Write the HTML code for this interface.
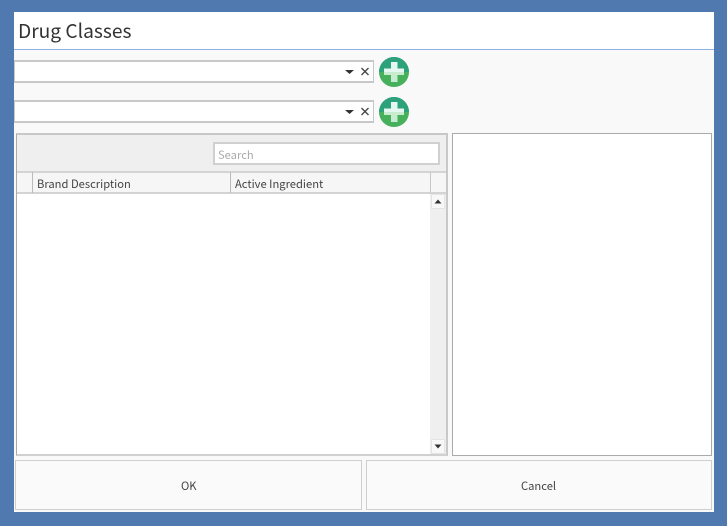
<!DOCTYPE html>
<html><head><meta charset="utf-8">
<style>
html,body{margin:0;padding:0;width:727px;height:526px;overflow:hidden;background:#5079b0;font-family:"Noto Sans CJK SC","Liberation Sans",sans-serif;}
div,svg{position:absolute;box-sizing:border-box;}
.t{white-space:nowrap;color:#444;font-size:11.2px;line-height:14px;}
.combo{left:14px;width:360px;height:23px;background:#fff;border:1px solid #c8c8c8;border-top-width:2px;border-bottom-width:2px;border-left-width:1px;}
</style></head><body>
<div style="left:14px;top:12px;width:700px;height:500px;background:#f9f9f9;"></div>
<div style="left:14px;top:12px;width:700px;height:37px;background:#fff;"></div>
<div style="left:14px;top:49px;width:700px;height:1px;background:#8fb3e0;"></div>
<div style="left:18px;top:17px;font-size:19.2px;line-height:26px;color:#333;white-space:nowrap;">Drug Classes</div>

<div class="combo" style="top:60px;"></div>
<div class="combo" style="top:100px;"></div>
<svg style="left:340px;top:60px" width="34" height="23"><path d="M5 10h9l-4.500 4z" fill="#333"/><path d="M21.500 8l7 7M28.500 8l-7 7" stroke="#444" stroke-width="1.300" fill="none"/></svg>
<svg style="left:340px;top:100px" width="34" height="23"><path d="M5 10h9l-4.500 4z" fill="#333"/><path d="M21.500 8l7 7M28.500 8l-7 7" stroke="#444" stroke-width="1.300" fill="none"/></svg>

<svg style="left:379px;top:57px" width="30" height="30"><circle cx="15" cy="15" r="15" fill="#46b05c"/><path d="M0 15A15 15 0 0 1 30 15z" fill="#2da07c"/><path d="M12 5h6.500v6.500H25v6.500h-6.500V25H12v-7H5v-6.500h7z" fill="#c8ecd0"/><path d="M12 5h6.500v6.500H25V15H5v-3.500h7z" fill="#e6f7f1"/></svg>
<svg style="left:379px;top:97px" width="30" height="30"><circle cx="15" cy="15" r="15" fill="#46b05c"/><path d="M0 15A15 15 0 0 1 30 15z" fill="#2da07c"/><path d="M12 5h6.500v6.500H25v6.500h-6.500V25H12v-7H5v-6.500h7z" fill="#c8ecd0"/><path d="M12 5h6.500v6.500H25V15H5v-3.500h7z" fill="#e6f7f1"/></svg>

<div style="left:16px;top:133px;width:432px;height:323px;background:#fff;border:1px solid #aaa;border-top:2px solid #c8c8c8;border-right:2px solid #c8c8c8;border-bottom:2px solid #d0d0d0;"></div>
<div style="left:17px;top:135px;width:429px;height:37px;background:#efefef;"></div>
<div style="left:213px;top:142px;width:227px;height:23px;background:#fff;border:2px solid #d0d0d0;"></div>
<div class="t" style="left:218px;top:148px;color:#aaa;">Search</div>
<div style="left:17px;top:171px;width:429px;height:23px;background:#f6f6f6;border-top:2px solid #d4d4d4;border-bottom:2px solid #d4d4d4;"></div>
<div style="left:32px;top:172px;width:1px;height:21px;background:#bbb;"></div>
<div style="left:230px;top:172px;width:1px;height:21px;background:#bbb;"></div>
<div style="left:430px;top:172px;width:1px;height:21px;background:#c8c8c8;"></div>
<div class="t" style="left:37px;top:177px;">Brand Description</div>
<div class="t" style="left:235px;top:177px;">Active Ingredient</div>

<div style="left:430px;top:194px;width:16px;height:260px;background:#efefef;"></div>
<div style="left:431px;top:194px;width:14px;height:15px;background:#f8f8f8;border:1px solid #e4e4e4;"></div>
<div style="left:431px;top:439px;width:14px;height:15px;background:#f8f8f8;border:1px solid #e4e4e4;"></div>
<svg style="left:431px;top:194px" width="14" height="15"><path d="M3.500 9.500h7L7 5.500z" fill="#333"/></svg>
<svg style="left:431px;top:439px" width="14" height="15"><path d="M3.500 5.500h7L7 9.500z" fill="#333"/></svg>

<div style="left:452px;top:133px;width:260px;height:323px;background:#fff;border:1px solid #aaa;"></div>

<div style="left:15px;top:460px;width:347px;height:50px;background:#fafafa;border:1px solid #cfcfcf;"></div>
<div style="left:366px;top:460px;width:346px;height:50px;background:#fafafa;border:1px solid #cfcfcf;"></div>
<div class="t" style="left:181px;top:479px;">OK</div>
<div class="t" style="left:521px;top:479px;">Cancel</div>
</body></html>
